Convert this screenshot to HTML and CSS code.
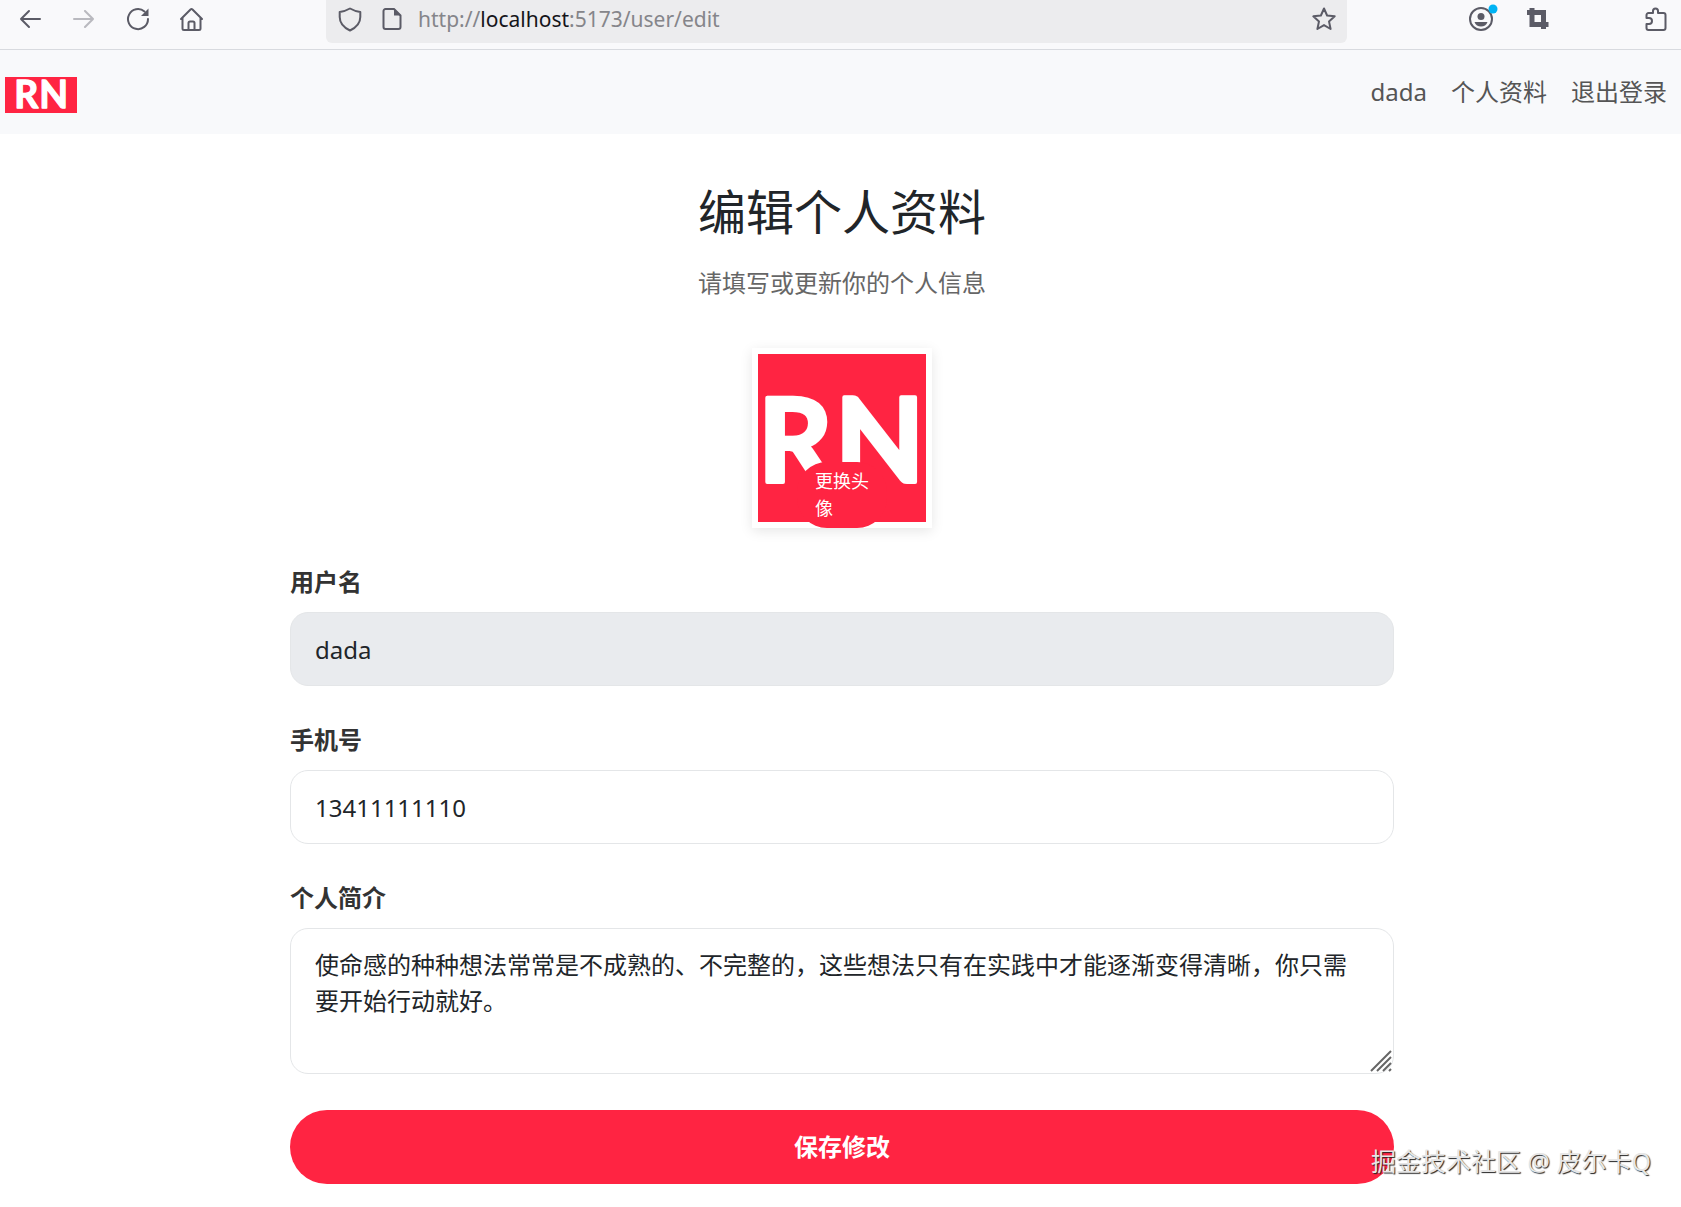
FILE: index.html
```html
<!DOCTYPE html>
<html lang="zh-CN">
  <head>
    <meta charset="UTF-8">
    <title>编辑个人资料</title>
    <link rel="stylesheet" href="styles.css">
  </head>
  <body>
	<div class="toolbar">
		<div class="tools">
			<button class="tool" aria-label="后退">
				<svg viewBox="0 0 24 24"><path d="M22 12H3M11 4l-8 8 8 8"/></svg>
			</button>
			<button class="tool" aria-label="前进" disabled>
				<svg viewBox="0 0 24 24"><path d="M2 12h19M13 4l8 8-8 8"/></svg>
			</button>
			<button class="tool" aria-label="刷新">
				<svg viewBox="0 0 24 24"><path d="M18.500 4.500A10 10 0 1 0 22 12"/><path class="fill" d="M22.500 1.500v7.500h-7.500z"/></svg>
			</button>
			<button class="tool" aria-label="主页">
				<svg viewBox="0 0 24 24"><path d="M1 12L10.500 2.500a1.500 1.500 0 0 1 2 0L22 12M2.500 11v10.500a1.500 1.500 0 0 0 1.500 1.500h15a1.500 1.500 0 0 0 1.500-1.500V11M8.500 23v-7a1.500 1.500 0 0 1 1.500-1.500h3a1.500 1.500 0 0 1 1.500 1.500v7"/></svg>
			</button>
		</div>
		<div class="address">
			<svg class="shield" viewBox="0 0 24 24"><path d="M12 1.500c3.500 2 6.500 3 10.300 3.500v5c0 6-4 10.500-10.300 13.500C5.700 20.500 1.700 16 1.700 10V5C5.500 4.500 8.500 3.500 12 1.500z"/></svg>
			<svg viewBox="0 0 24 24"><path d="M14 2H5.500a2 2 0 0 0-2 2v16a2 2 0 0 0 2 2h13a2 2 0 0 0 2-2V8.500z"/><path class="fill" d="M14 1.500V8.500h7z"/></svg>
			<p class="url">http://<b>localhost</b>:5173/user/edit</p>
			<button class="tool" aria-label="收藏">
				<svg viewBox="0 0 24 24"><path d="M12 1.500l3.100 7 7.600.8-5.700 5.100 1.600 7.600-6.600-3.900L5.400 22 7 14.400 1.300 9.300l7.600-.8z"/></svg>
			</button>
		</div>
		<div class="tools tools-right">
			<button class="tool" aria-label="账户">
				<svg viewBox="0 0 24 24"><circle cx="12" cy="12" r="11"/><circle class="fill" cx="12" cy="9.500" r="3.500"/><path class="fill" d="M5.500 15h13c-1 3-3.500 4.500-6.500 4.500S6.500 18 5.500 15z"/><circle class="dot" cx="24" cy="2" r="4.500"/></svg>
			</button>
			<button class="tool" aria-label="截图">
				<svg class="crop" viewBox="0 0 24 24"><path d="M1 5.500H17.500V22M6 1V17.500H22.500"/></svg>
			</button>
			<button class="tool tool-last" aria-label="扩展">
				<svg viewBox="0 0 24 24"><path d="M3.500 11V8a2 2 0 0 1 2-2H10V4a2.500 2.500 0 0 1 5 0v2h5.500a2 2 0 0 1 2 2V21a2 2 0 0 1-2 2h-15a2 2 0 0 1-2-2v-4H6a3 3 0 0 0 0-6z"/></svg>
			</button>
		</div>
	</div>

	<header class="navbar">
		<a href="#" aria-label="首页">
			<svg class="logo" viewBox="-29 33 223 111">
				<text x="0" y="128">R</text>
				<text x="77" y="128">N</text>
			</svg>
		</a>
		<nav class="links">
			<a href="#">dada</a>
			<a href="#">个人资料</a>
			<a href="#">退出登录</a>
		</nav>
	</header>

	<main>
		<h1>编辑个人资料</h1>
		<p class="subtitle">请填写或更新你的个人信息</p>

		<div class="avatar">
			<svg class="logo" viewBox="0 0 168 168">
				<text x="0" y="128">R</text>
				<text x="77" y="128">N</text>
			</svg>
			<button class="change">更换头像</button>
		</div>

		<form>
			<div class="field">
				<label for="username">用户名</label>
				<input id="username" type="text" value="dada" disabled>
			</div>
			<div class="field">
				<label for="phone">手机号</label>
				<input id="phone" type="text" value="13411111110">
			</div>
			<div class="field">
				<label for="intro">个人简介</label>
				<div class="area">
					<textarea id="intro" rows="3">使命感的种种想法常常是不成熟的、不完整的，这些想法只有在实践中才能逐渐变得清晰，你只需要开始行动就好。</textarea>
					<svg class="grip" viewBox="0 0 22 22"><path d="M1 21L21 1M7 21L21 7M13 21l8-8M19 21l2-2"/></svg>
				</div>
			</div>
			<button class="save" type="button">保存修改</button>
		</form>
	</main>

	<p class="watermark">掘金技术社区 @ 皮尔卡Q</p>
  </body>
</html>
```
FILE: styles.css
```css
* {
	box-sizing: border-box;
}

body {
	position: relative;
	min-height: 100vh;
	margin: 0;
	background-color: #fff;
	color: #212529;
	font-family: 'Noto Sans', 'Noto Sans CJK SC', sans-serif;
	font-size: 24px;
	line-height: 36px;
}

h1, p {
	margin: 0;
}

button, input, textarea {
	font: inherit;
	color: inherit;
}

button {
	border: none;
	cursor: pointer;
}

/* Browser toolbar */
.toolbar {
	display: flex;
	align-items: flex-start;
	height: 50px;
	padding: 0 14px 0 18px;
	background-color: #f9f9fb;
	border-bottom: 1px solid #d8dadf;
}

.tools {
	display: flex;
	gap: 30px;
}

.tools-right {
	gap: 33px;
}

.tool {
	display: flex;
	align-items: center;
	height: 38px;
	padding: 0;
	background: none;
}

.tool:disabled {
	opacity: 0.4;
}

.tool-last {
	margin-left: 60px;
}

.toolbar svg {
	width: 24px;
	height: 24px;
	flex: none;
	overflow: visible;
	fill: none;
	stroke: #5b5b66;
	stroke-width: 2;
	stroke-linecap: round;
	stroke-linejoin: round;
}

.toolbar .fill {
	fill: #5b5b66;
	stroke: none;
}

.toolbar .dot {
	fill: #00b3f4;
	stroke: none;
}

.toolbar .crop {
	stroke-width: 5;
	stroke-linecap: butt;
	stroke-linejoin: miter;
}

.address {
	display: flex;
	align-items: center;
	flex: 1;
	gap: 14px;
	height: 43px;
	margin: 0 122px;
	padding: 0 11px 5px 12px;
	background-color: #ececee;
	border-radius: 0 0 6px 6px;
}

.shield {
	margin-right: 4px;
}

.url {
	flex: 1;
	font-size: 21px;
	color: #85858a;
}

.url b {
	font-weight: normal;
	color: #15141a;
}

/* Site header */
.navbar {
	display: flex;
	align-items: center;
	justify-content: space-between;
	height: 84px;
	padding: 0 14px 0 5px;
	background-color: #f8f9fb;
}

.logo {
	display: block;
	background-color: #ff2442;
	fill: #fff;
	stroke: #fff;
	stroke-width: 4;
	stroke-linejoin: round;
	font-family: Lato, sans-serif;
	font-size: 116px;
	font-weight: bold;
}

.navbar .logo {
	width: 72px;
	height: 36px;
	margin-top: 6px;
}

.links {
	display: flex;
	gap: 24px;
}

.links a {
	color: #555;
	text-decoration: none;
}

/* Profile form */
main {
	padding: 49px 287px 22px 290px;
}

h1 {
	font-size: 48px;
	font-weight: normal;
	line-height: 58px;
	text-align: center;
}

.subtitle {
	margin: 24px 0 47px;
	color: #666;
	text-align: center;
}

.avatar {
	position: relative;
	width: 180px;
	height: 180px;
	margin: 0 auto 36px;
	border: 6px solid #fff;
	box-shadow: 0 3px 12px rgba(0, 0, 0, 0.1);
}

.change {
	position: absolute;
	right: 39px;
	bottom: -6px;
	width: 90px;
	padding: 6px 18px;
	background-color: #ff2442;
	border-radius: 30px;
	color: #fff;
	font-size: 18px;
	line-height: 27px;
	text-align: left;
}

.field {
	margin-bottom: 36px;
}

label {
	display: block;
	margin-bottom: 12px;
	color: #333;
	font-weight: bold;
}

input, textarea {
	display: block;
	width: 100%;
	padding: 18px 24px;
	background-color: #fff;
	border: 1px solid #e4e6e8;
	border-radius: 18px;
}

input {
	height: 74px;
}

input:disabled {
	background-color: #e9ebee;
}

textarea {
	resize: none;
}

.area {
	position: relative;
}

.grip {
	position: absolute;
	right: 2px;
	bottom: 2px;
	width: 22px;
	height: 22px;
	fill: none;
	stroke: #666;
	stroke-width: 2;
	pointer-events: none;
}

.save {
	display: block;
	width: 100%;
	padding: 19px;
	background-color: #ff2442;
	border-radius: 37px;
	color: #fff;
	font-weight: bold;
}

.watermark {
	position: absolute;
	right: 30px;
	bottom: 28px;
	color: #e6e6e6;
	font-size: 25px;
	text-shadow: 1px 1px 1px #222;
}
```
